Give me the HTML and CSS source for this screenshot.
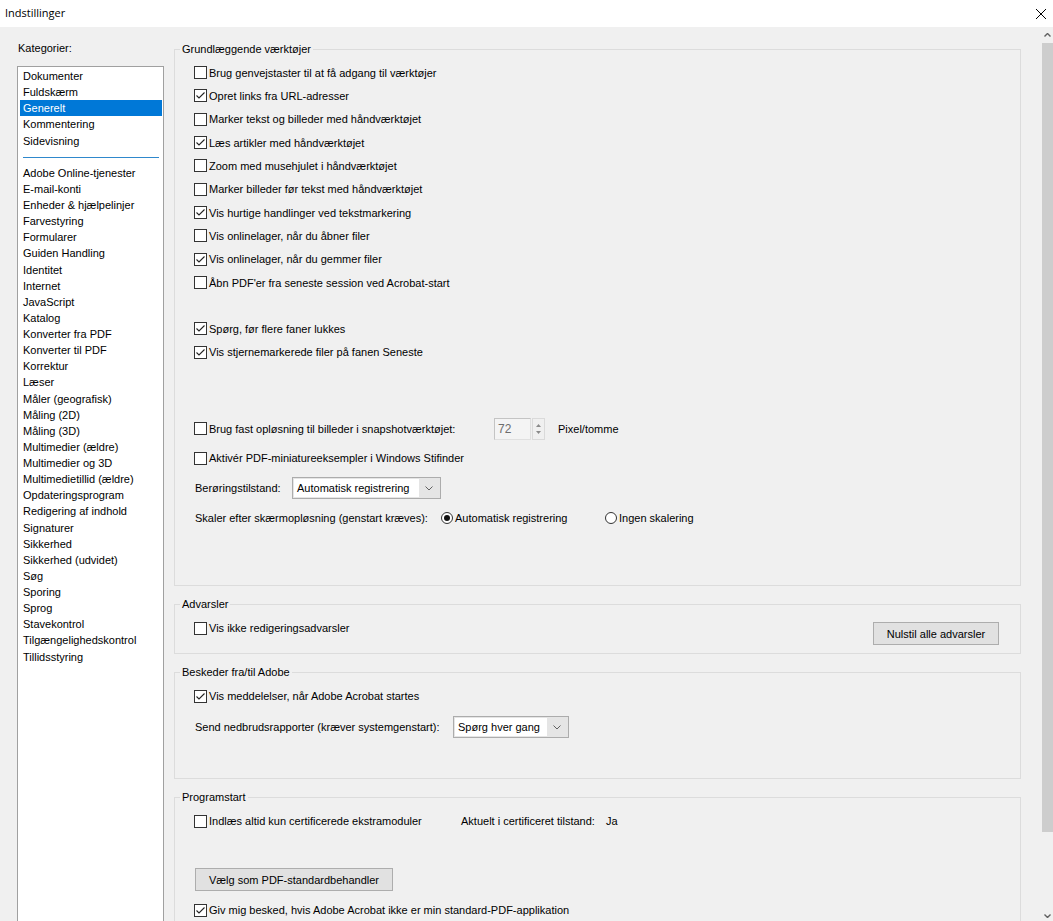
FILE: index.html
```html
<!DOCTYPE html>
<html lang="da">
<head>
    <meta charset="UTF-8">
    <title>Indstillinger</title>
    <link rel="stylesheet" href="styles.css">
</head>
<body>
    <div class="titlebar">
        <span class="title">Indstillinger</span>
        <svg class="close" width="12" height="12" viewBox="0 0 12 12">
            <path d="M1 1 L11 11 M11 1 L1 11" stroke="#000" stroke-width="1" fill="none"/>
        </svg>
    </div>

    <div class="dialog">
        <aside class="sidebar">
            <div class="cat-label">Kategorier:</div>
            <ul class="cat-list">
                <li>Dokumenter</li>
                <li>Fuldskærm</li>
                <li class="selected">Generelt</li>
                <li>Kommentering</li>
                <li>Sidevisning</li>
                <li class="sep"><span></span></li>
                <li>Adobe Online-tjenester</li>
                <li>E-mail-konti</li>
                <li>Enheder &amp; hjælpelinjer</li>
                <li>Farvestyring</li>
                <li>Formularer</li>
                <li>Guiden Handling</li>
                <li>Identitet</li>
                <li>Internet</li>
                <li>JavaScript</li>
                <li>Katalog</li>
                <li>Konverter fra PDF</li>
                <li>Konverter til PDF</li>
                <li>Korrektur</li>
                <li>Læser</li>
                <li>Måler (geografisk)</li>
                <li>Måling (2D)</li>
                <li>Måling (3D)</li>
                <li>Multimedier (ældre)</li>
                <li>Multimedier og 3D</li>
                <li>Multimedietillid (ældre)</li>
                <li>Opdateringsprogram</li>
                <li>Redigering af indhold</li>
                <li>Signaturer</li>
                <li>Sikkerhed</li>
                <li>Sikkerhed (udvidet)</li>
                <li>Søg</li>
                <li>Sporing</li>
                <li>Sprog</li>
                <li>Stavekontrol</li>
                <li>Tilgængelighedskontrol</li>
                <li>Tillidsstyring</li>
            </ul>
        </aside>

        <main class="panel">
            <!-- Grundlæggende værktøjer -->
            <fieldset class="group">
                <legend>Grundlæggende værktøjer</legend>
                <div class="group-body tools">
                    <div class="row"><label class="check"><span class="box"></span>Brug genvejstaster til at få adgang til værktøjer</label></div>
                    <div class="row"><label class="check"><span class="box checked"><svg viewBox="0 0 11 11"><path d="M1.5 5.5 L4 8 L9.5 2.5"/></svg></span>Opret links fra URL-adresser</label></div>
                    <div class="row"><label class="check"><span class="box"></span>Marker tekst og billeder med håndværktøjet</label></div>
                    <div class="row"><label class="check"><span class="box checked"><svg viewBox="0 0 11 11"><path d="M1.5 5.5 L4 8 L9.5 2.5"/></svg></span>Læs artikler med håndværktøjet</label></div>
                    <div class="row"><label class="check"><span class="box"></span>Zoom med musehjulet i håndværktøjet</label></div>
                    <div class="row"><label class="check"><span class="box"></span>Marker billeder før tekst med håndværktøjet</label></div>
                    <div class="row"><label class="check"><span class="box checked"><svg viewBox="0 0 11 11"><path d="M1.5 5.5 L4 8 L9.5 2.5"/></svg></span>Vis hurtige handlinger ved tekstmarkering</label></div>
                    <div class="row"><label class="check"><span class="box"></span>Vis onlinelager, når du åbner filer</label></div>
                    <div class="row"><label class="check"><span class="box checked"><svg viewBox="0 0 11 11"><path d="M1.5 5.5 L4 8 L9.5 2.5"/></svg></span>Vis onlinelager, når du gemmer filer</label></div>
                    <div class="row"><label class="check"><span class="box"></span>Åbn PDF'er fra seneste session ved Acrobat-start</label></div>

                    <div class="row gap-row"><label class="check"><span class="box checked"><svg viewBox="0 0 11 11"><path d="M1.5 5.5 L4 8 L9.5 2.5"/></svg></span>Spørg, før flere faner lukkes</label></div>
                    <div class="row"><label class="check"><span class="box checked"><svg viewBox="0 0 11 11"><path d="M1.5 5.5 L4 8 L9.5 2.5"/></svg></span>Vis stjernemarkerede filer på fanen Seneste</label></div>

                    <div class="row tall first-tall">
                        <label class="check snap-label"><span class="box"></span>Brug fast opløsning til billeder i snapshotværktøjet:</label>
                        <span class="spin-field">72</span>
                        <span class="spin-buttons">
                            <svg width="5" height="3" viewBox="0 0 5 3"><path d="M0 3 L2.5 0 L5 3 Z" fill="#8a8a8a"/></svg>
                            <svg width="5" height="3" viewBox="0 0 5 3"><path d="M0 0 L2.5 3 L5 0 Z" fill="#8a8a8a"/></svg>
                        </span>
                        <span class="unit">Pixel/tomme</span>
                    </div>
                    <div class="row tall"><label class="check"><span class="box"></span>Aktivér PDF-miniatureeksempler i Windows Stifinder</label></div>
                    <div class="row tall">
                        <span class="field-label touch-label">Berøringstilstand:</span>
                        <span class="combo touch-combo">
                            <span class="combo-text">Automatisk registrering</span>
                            <span class="combo-arrow"><svg width="8" height="5" viewBox="0 0 8 5"><path d="M0.5 0.5 L4 4 L7.5 0.5" stroke="#606060" fill="none"/></svg></span>
                        </span>
                    </div>
                    <div class="row tall">
                        <span class="field-label scale-label">Skaler efter skærmopløsning (genstart kræves):</span>
                        <label class="radio auto-radio"><span class="dot on"></span>Automatisk registrering</label>
                        <label class="radio"><span class="dot"></span>Ingen skalering</label>
                    </div>
                </div>
            </fieldset>

            <!-- Advarsler -->
            <fieldset class="group">
                <legend>Advarsler</legend>
                <div class="group-body warnings">
                    <label class="check"><span class="box"></span>Vis ikke redigeringsadvarsler</label>
                    <button class="btn reset-btn">Nulstil alle advarsler</button>
                </div>
            </fieldset>

            <!-- Beskeder fra/til Adobe -->
            <fieldset class="group">
                <legend>Beskeder fra/til Adobe</legend>
                <div class="group-body messages">
                    <label class="check"><span class="box checked"><svg viewBox="0 0 11 11"><path d="M1.5 5.5 L4 8 L9.5 2.5"/></svg></span>Vis meddelelser, når Adobe Acrobat startes</label>
                    <div class="crash-row">
                        <span class="field-label crash-label">Send nedbrudsrapporter (kræver systemgenstart):</span>
                        <span class="combo crash-combo">
                            <span class="combo-text">Spørg hver gang</span>
                            <span class="combo-arrow"><svg width="8" height="5" viewBox="0 0 8 5"><path d="M0.5 0.5 L4 4 L7.5 0.5" stroke="#606060" fill="none"/></svg></span>
                        </span>
                    </div>
                </div>
            </fieldset>

            <!-- Programstart -->
            <fieldset class="group">
                <legend>Programstart</legend>
                <div class="group-body startup">
                    <div class="cert-row">
                        <label class="check cert-check"><span class="box"></span>Indlæs altid kun certificerede ekstramoduler</label>
                        <span class="cert-state">Aktuelt i certificeret tilstand:</span>
                        <span>Ja</span>
                    </div>
                    <button class="btn default-btn">Vælg som PDF-standardbehandler</button>
                    <label class="check"><span class="box checked"><svg viewBox="0 0 11 11"><path d="M1.5 5.5 L4 8 L9.5 2.5"/></svg></span>Giv mig besked, hvis Adobe Acrobat ikke er min standard-PDF-applikation</label>
                </div>
            </fieldset>
        </main>

        <div class="scrollbar">
            <div class="scroll-btn">
                <svg width="7" height="4" viewBox="0 0 7 4"><path d="M0.5 3.5 L3.5 0.5 L6.5 3.5" stroke="#606060" stroke-width="1.4" fill="none"/></svg>
            </div>
            <div class="scroll-thumb"></div>
            <div class="scroll-rest"></div>
            <div class="scroll-btn down">
                <svg width="7" height="4" viewBox="0 0 7 4"><path d="M0.5 0.5 L3.5 3.5 L6.5 0.5" stroke="#606060" stroke-width="1.4" fill="none"/></svg>
            </div>
        </div>
    </div>
</body>
</html>
```

FILE: styles.css
```css
html, body {
    margin: 0;
    padding: 0;
    height: 921px;
    overflow: hidden;
}

body {
    font-family: "Liberation Sans", Arial, sans-serif;
    font-size: 11px;
    color: #000;
    background-color: #f0f0f0;
}

/* title bar */
.titlebar {
    height: 27px;
    background-color: #fff;
    display: flex;
    align-items: center;
    justify-content: space-between;
    padding: 0 6px 2px 5px;
    box-sizing: border-box;
}

.title {
    font-family: "Open Sans", "Liberation Sans", sans-serif;
    font-size: 11px;
}

.close {
    margin-top: 2px;
}

.dialog {
    display: flex;
    height: 894px;
}

/* categories */
.sidebar {
    width: 174px;
    padding-left: 17px;
    box-sizing: border-box;
    flex-shrink: 0;
}

.cat-label {
    margin-top: 14px;
    line-height: 14px;
    padding-left: 1px;
}

.cat-list {
    list-style: none;
    margin: 11px 0 0 0;
    padding: 1px 1px 0 2px;
    width: 147px;
    height: 900px;
    box-sizing: border-box;
    background-color: #fff;
    border: 1px solid #a0a0a0;
}

.cat-list li {
    line-height: 16.14px;
    height: 16.14px;
    padding-left: 3px;
    white-space: nowrap;
}

.cat-list li.selected {
    background-color: #0078d7;
    color: #fff;
}

.cat-list li.sep {
    display: flex;
    align-items: center;
    padding: 0 3px 0 3px;
}

.cat-list li.sep span {
    display: block;
    width: 100%;
    height: 1px;
    margin-top: 1px;
    background-color: #2f88cc;
}

/* right panel */
.panel {
    flex: 1;
    padding: 15px 20px 0 0;
}

.group {
    margin: 0 0 11px 0;
    padding: 0;
    border: 1px solid #dcdcdc;
    min-width: 0;
}

.group legend {
    margin-left: 5px;
    padding: 0 2px;
    line-height: 14px;
}

.group-body {
    padding: 0 21px 0 19px;
    box-sizing: border-box;
}

.tools {
    height: 529px;
    padding-top: 5px;
}

.row {
    height: 23.33px;
    display: flex;
    align-items: center;
    white-space: nowrap;
}

.row.gap-row {
    margin-top: 23px;
}

.row.tall {
    height: 29.7px;
}

.row.first-tall {
    margin-top: 50px;
}

/* checkbox + radio */
.check {
    display: flex;
    align-items: center;
    height: 14px;
    white-space: nowrap;
}

.box {
    width: 13px;
    height: 13px;
    box-sizing: border-box;
    border: 1px solid #333;
    background-color: #fff;
    margin-right: 2px;
    flex-shrink: 0;
    display: flex;
}

.box svg {
    width: 11px;
    height: 11px;
}

.box svg path {
    stroke: #222;
    stroke-width: 1.1;
    fill: none;
}

.radio {
    display: flex;
    align-items: center;
}

.dot {
    width: 12px;
    height: 12px;
    box-sizing: border-box;
    border: 1px solid #333;
    border-radius: 50%;
    background-color: #fff;
    margin-right: 2px;
    display: flex;
    align-items: center;
    justify-content: center;
}

.dot.on::after {
    content: "";
    width: 6px;
    height: 6px;
    border-radius: 50%;
    background-color: #111;
}

.auto-radio {
    width: 164px;
}

.field-label {
    padding-left: 1px;
}

.snap-label {
    width: 300px;
}

.touch-label {
    width: 97px;
}

.scale-label {
    width: 246px;
}

/* spin box */
.spin-field {
    width: 37px;
    height: 22px;
    box-sizing: border-box;
    border: 1px solid #c4c4c4;
    border-right-color: #e0e0e0;
    border-bottom-color: #e0e0e0;
    background-color: #f4f4f4;
    color: #6d6d6d;
    padding: 3px 0 0 3px;
    font-size: 12px;
}

.spin-buttons {
    width: 13px;
    height: 22px;
    box-sizing: border-box;
    border: 1px solid #dadada;
    margin-left: 1px;
    display: flex;
    flex-direction: column;
    align-items: center;
    justify-content: space-around;
    padding: 3px 0;
}

.unit {
    margin-left: 13px;
}

/* combo boxes */
.combo {
    display: flex;
    height: 22px;
    box-sizing: border-box;
    border: 1px solid #acacac;
    background-color: #e5e5e5;
    padding: 1px;
}

.combo-text {
    flex: 1;
    background-color: #fff;
    padding-left: 3px;
    line-height: 18px;
}

.combo-arrow {
    width: 20px;
    display: flex;
    align-items: center;
    justify-content: center;
}

.touch-combo {
    width: 149px;
}

.crash-combo {
    width: 116px;
}

/* buttons */
.btn {
    font-family: inherit;
    font-size: 11px;
    color: #000;
    height: 23px;
    background-color: #e1e1e1;
    border: 1px solid #adadad;
    padding: 0 10px;
}

.warnings {
    height: 42px;
    padding-top: 10px;
    display: flex;
    justify-content: space-between;
    align-items: flex-start;
}

.reset-btn {
    width: 126px;
    margin-top: 1px;
}

.messages {
    height: 99px;
    padding-top: 10px;
}

.crash-row {
    display: flex;
    align-items: center;
    margin-top: 13px;
}

.crash-label {
    width: 258px;
}

.startup {
    height: 200px;
    padding-top: 10px;
}

.cert-row {
    display: flex;
    align-items: center;
}

.cert-check {
    width: 267px;
}

.cert-state {
    margin-right: 11px;
}

.default-btn {
    display: block;
    width: 198px;
    margin: 40px 0 12px 1px;
}

/* scrollbar */
.scrollbar {
    width: 12px;
    flex-shrink: 0;
    display: flex;
    flex-direction: column;
    background-color: #f0f0f0;
}

.scroll-btn {
    height: 16px;
    display: flex;
    align-items: center;
    justify-content: center;
    padding-left: 1px;
}

.scroll-btn.down {
    height: 12px;
    align-items: flex-end;
    padding-bottom: 3px;
}

.scroll-thumb {
    height: 789px;
    margin-left: 1px;
    background-color: #cdcdcd;
}

.scroll-rest {
    flex: 1;
}
```
